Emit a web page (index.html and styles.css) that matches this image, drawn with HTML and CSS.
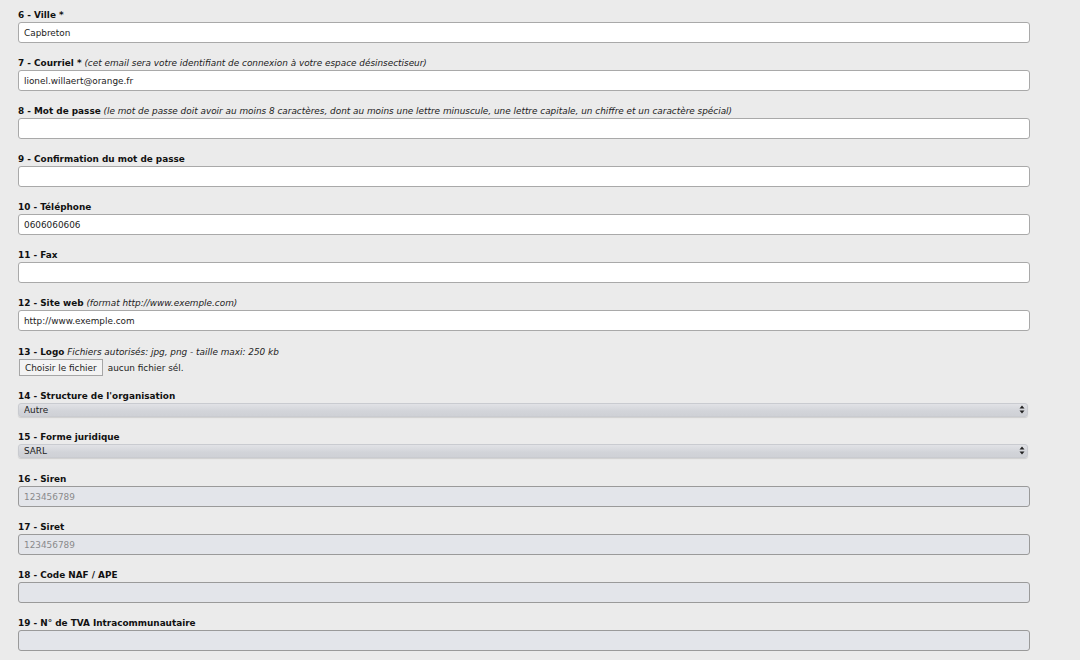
FILE: index.html
```html
<!DOCTYPE html>
<html lang="fr">
<head>
<meta charset="utf-8">
<link rel="stylesheet" href="styles.css">
</head>
<body>
<form class="form">
  <div class="field">
    <label class="lbl"><b>6 - Ville *</b></label>
    <input class="txt" type="text" value="Capbreton">
  </div>
  <div class="field">
    <label class="lbl"><b>7 - Courriel *</b> <i>(cet email sera votre identifiant de connexion à votre espace désinsectiseur)</i></label>
    <input class="txt" type="text" value="lionel.willaert@orange.fr">
  </div>
  <div class="field">
    <label class="lbl"><b>8 - Mot de passe</b> <i>(le mot de passe doit avoir au moins 8 caractères, dont au moins une lettre minuscule, une lettre capitale, un chiffre et un caractère spécial)</i></label>
    <input class="txt" type="password">
  </div>
  <div class="field">
    <label class="lbl"><b>9 - Confirmation du mot de passe</b></label>
    <input class="txt" type="password">
  </div>
  <div class="field">
    <label class="lbl"><b>10 - Téléphone</b></label>
    <input class="txt" type="text" value="0606060606">
  </div>
  <div class="field">
    <label class="lbl"><b>11 - Fax</b></label>
    <input class="txt" type="text">
  </div>
  <div class="field field-loose">
    <label class="lbl"><b>12 - Site web</b> <i>(format http://www.exemple.com)</i></label>
    <input class="txt" type="text" value="http://www.exemple.com">
  </div>
  <div class="field">
    <label class="lbl"><b>13 - Logo</b> <i>Fichiers autorisés: jpg, png - taille maxi: 250 kb</i></label>
    <div class="file">
      <button type="button" class="filebtn">Choisir le fichier</button>
      <span class="filename">aucun fichier sél.</span>
    </div>
  </div>
  <div class="field">
    <label class="lbl"><b>14 - Structure de l'organisation</b></label>
    <div class="selwrap">
      <select class="sel"><option>Autre</option></select>
      <svg class="arrows" width="6" height="9" viewBox="0 0 6 9"><path d="M3 0.5 L5.5 3.5 H0.5 Z M3 8.5 L5.5 5.5 H0.5 Z" fill="#222"/></svg>
    </div>
  </div>
  <div class="field field-loose">
    <label class="lbl"><b>15 - Forme juridique</b></label>
    <div class="selwrap">
      <select class="sel"><option>SARL</option></select>
      <svg class="arrows" width="6" height="9" viewBox="0 0 6 9"><path d="M3 0.5 L5.5 3.5 H0.5 Z M3 8.5 L5.5 5.5 H0.5 Z" fill="#222"/></svg>
    </div>
  </div>
  <div class="field">
    <label class="lbl"><b>16 - Siren</b></label>
    <input class="txt dis" type="text" placeholder="123456789" disabled>
  </div>
  <div class="field">
    <label class="lbl"><b>17 - Siret</b></label>
    <input class="txt dis" type="text" placeholder="123456789" disabled>
  </div>
  <div class="field">
    <label class="lbl"><b>18 - Code NAF / APE</b></label>
    <input class="txt dis" type="text" disabled>
  </div>
  <div class="field">
    <label class="lbl"><b>19 - N° de TVA Intracommunautaire</b></label>
    <input class="txt dis" type="text" disabled>
  </div>
</form>
</body>
</html>
```
FILE: styles.css
```css
html, body {
  margin: 0;
  padding: 0;
  background: #ebebeb;
}
body {
  font-family: "DejaVu Sans", "Noto Sans", sans-serif;
  font-size: 8.9px;
  color: #111;
}
.form {
  display: flex;
  flex-direction: column;
  padding: 8px 0 0 18px;
  width: 1012px;
}
.field {
  display: flex;
  flex-direction: column;
  margin-bottom: 13px;
}
.field-loose { margin-bottom: 14px; }
.lbl {
  display: block;
  height: 14px;
  line-height: 14px;
  white-space: nowrap;
  font-size: 8.9px;
}
.lbl b { font-weight: 700; color: #111; }
.lbl i { font-style: italic; color: #222; font-weight: 400; }
.txt {
  box-sizing: border-box;
  width: 1012px;
  height: 21px;
  margin: 0;
  padding: 0 5px;
  border: 1px solid #a9a9a9;
  border-radius: 3px;
  background: #fff;
  font-family: inherit;
  font-size: 8.9px;
  color: #222;
  outline: none;
}
.txt.dis {
  background: #e3e5ea;
  border-color: #9a9a9a;
}
.txt::placeholder { color: #8a8a8a; opacity: 1; }
.file {
  display: flex;
  align-items: center;
  height: 17px;
  gap: 5px;
}
.filebtn {
  box-sizing: border-box;
  height: 17px;
  margin: 0 0 0 1px;
  padding: 0 5px;
  border: 1px solid #a6a6a6;
  border-radius: 0;
  background: #f3f3f3;
  font-family: inherit;
  font-size: 8.9px;
  color: #222;
}
.filename { font-size: 8.9px; color: #222; }
.selwrap {
  position: relative;
  width: 1010px;
  height: 14px;
}
.sel {
  box-sizing: border-box;
  appearance: none;
  -webkit-appearance: none;
  width: 1010px;
  height: 14px;
  margin: 0;
  padding: 0 5px;
  border: 1px solid #c9cbd0;
  border-radius: 3px;
  background: linear-gradient(#e1e2e6, #d2d4d9 60%, #cfd1d6);
  font-family: inherit;
  font-size: 8.9px;
  line-height: 12px;
  color: #222;
  box-shadow: 0 1px 1px rgba(0,0,0,0.12);
}
.arrows {
  position: absolute;
  right: 3px;
  top: 2px;
}
```
